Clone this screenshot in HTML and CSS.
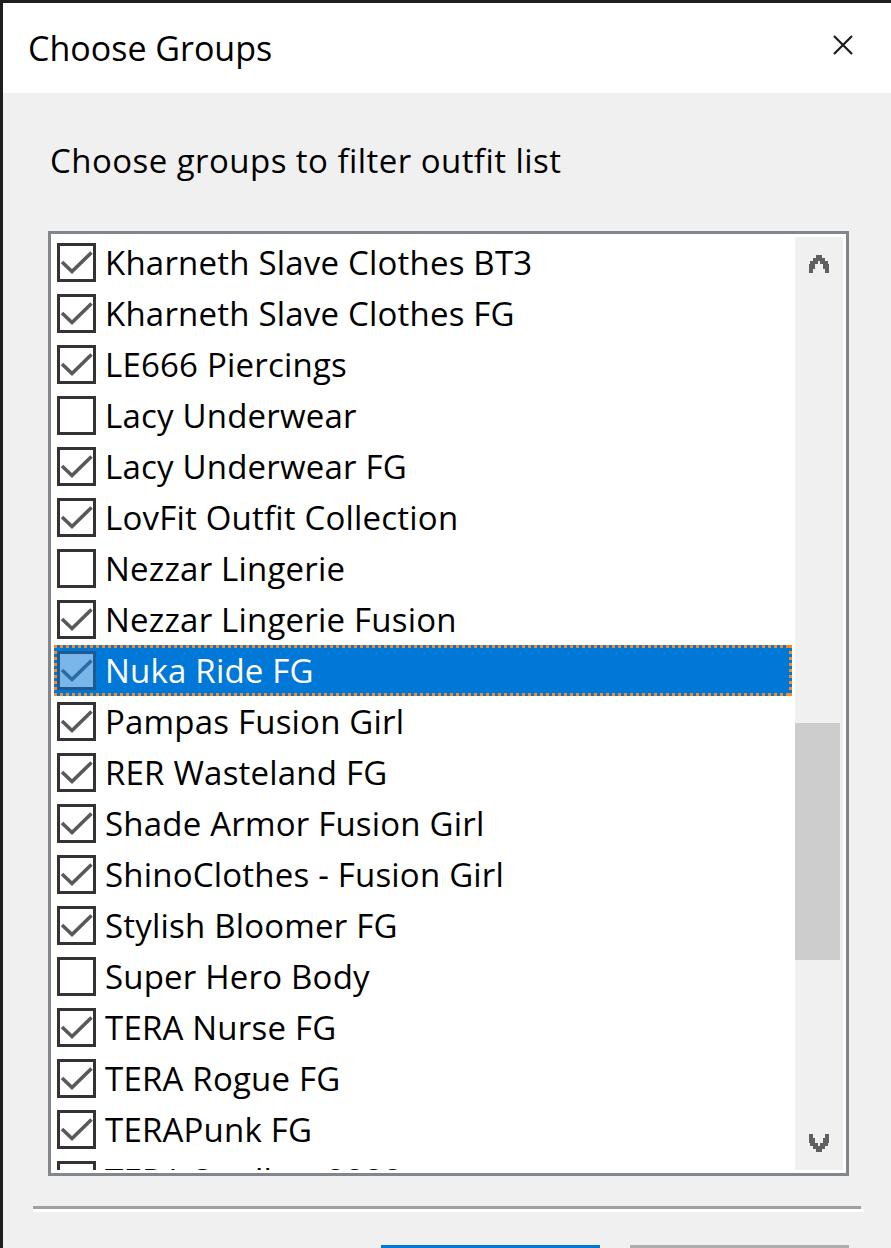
FILE: index.html
```html
<!DOCTYPE html>
<html lang="en">
<head>
    <meta charset="UTF-8">
    <meta name="viewport" content="width=device-width, initial-scale=1.0">
    <title>Choose Groups</title>
    <link rel="stylesheet" href="styles.css">
</head>
<body>
    <div class="window">
        <div class="titlebar">
            <span class="title">Choose Groups</span>
            <svg class="close" width="20" height="20" viewBox="0 0 20 20">
                <path d="M1 1 L19 19 M19 1 L1 19" stroke="#1a1a1a" stroke-width="2.2" fill="none"/>
            </svg>
        </div>

        <div class="content">
            <div class="prompt">Choose groups to filter outfit list</div>

            <div class="listbox">
                <div class="items" id="items"></div>
                <div class="scrollbar">
                    <div class="arrow">
                        <svg class="chevron" width="20" height="18" viewBox="0 0 20 18"><g id="chev">
                            <rect x="7" y="0" width="6" height="3"/>
                            <rect x="4" y="3" width="12" height="3"/>
                            <rect x="1" y="6" width="8" height="3"/><rect x="11" y="6" width="8" height="3"/>
                            <rect x="0" y="9" width="6" height="5"/><rect x="14" y="9" width="6" height="5"/>
                            <rect x="0" y="14" width="4" height="4"/><rect x="16" y="14" width="4" height="4"/>
                        </g></svg>
                    </div>
                    <div class="track"><div class="thumb"></div></div>
                    <div class="arrow">
                        <svg class="chevron" width="20" height="18" viewBox="0 0 20 18"><use href="#chev" transform="translate(0 18) scale(1 -1)"/></svg>
                    </div>
                </div>
            </div>

            <div class="separator"></div>

            <div class="buttons">
                <div class="btn default"></div>
                <div class="btn"></div>
            </div>
        </div>
    </div>

    <script>
        const groups = [
            ['Kharneth Slave Clothes BT3', true],
            ['Kharneth Slave Clothes FG', true],
            ['LE666 Piercings', true],
            ['Lacy Underwear', false],
            ['Lacy Underwear FG', true],
            ['LovFit Outfit Collection', true],
            ['Nezzar Lingerie', false],
            ['Nezzar Lingerie Fusion', true],
            ['Nuka Ride FG', true],
            ['Pampas Fusion Girl', true],
            ['RER Wasteland FG', true],
            ['Shade Armor Fusion Girl', true],
            ['ShinoClothes - Fusion Girl', true],
            ['Stylish Bloomer FG', true],
            ['Super Hero Body', false],
            ['TERA Nurse FG', true],
            ['TERA Rogue FG', true],
            ['TERAPunk FG', true],
            ['TERA Swallow 2222', false]
        ];
        const selected = 8;

        const tick = '<svg viewBox="0 0 33 33" width="33" height="33"><polyline points="2,16 12,25.5 31.5,6.5" fill="none" stroke-width="3.6"/></svg>';

        const list = document.getElementById('items');
        groups.forEach(([name, checked], i) => {
            const row = document.createElement('div');
            row.className = 'item' + (i === selected ? ' selected' : '');
            row.innerHTML = `<span class="check">${checked ? tick : ''}</span><span class="label">${name}</span>`;
            list.appendChild(row);
        });
    </script>
</body>
</html>
```

FILE: styles.css
```css
html, body {
    margin: 0;
    height: 100%;
    overflow: hidden;
}

body {
    background: #f0f0f0;
    font-family: 'Open Sans', 'Noto Sans', sans-serif;
    font-size: 33px;
    color: #000;
}

.window {
    height: 1245px;
    border-left: 3px solid #1f1f1f;
    border-top: 3px solid #1f1f1f;
}

.titlebar {
    height: 90px;
    background: #fff;
    display: flex;
    justify-content: space-between;
    align-items: center;
    padding: 0 38px 0 25px;
}

.title {
    font-size: 34px;
}

.close {
    align-self: flex-start;
    margin-top: 32px;
}

.content {
    padding-left: 45px;
}

.prompt {
    margin-top: 42px;
    margin-left: 2px;
    line-height: 51px;
    letter-spacing: 0.45px;
}

.listbox {
    margin-top: 45px;
    width: 789px;
    height: 933px;
    border: 3px solid #82868d;
    background: #fff;
    padding: 3px;
    display: flex;
    gap: 3px;
}

.items {
    flex: 1;
    height: 933px;
    overflow: hidden;
}

.item {
    position: relative;
    height: 51px;
    display: flex;
    align-items: center;
    padding-left: 3px;
    white-space: nowrap;
    letter-spacing: 0.2px;
}

.check {
    width: 33px;
    height: 33px;
    border: 3px solid #333;
    background: #fff;
    margin-right: 9px;
    flex: none;
}

.check svg {
    display: block;
    stroke: #595959;
}

.item.selected {
    background: #0078d7;
    color: #fff;
}

/* dotted focus rectangle */
.item.selected::after {
    content: '';
    position: absolute;
    inset: 0;
    background:
        repeating-linear-gradient(90deg, #ff8a1c 0 3px, transparent 3px 6px) top / 100% 3px no-repeat,
        repeating-linear-gradient(90deg, #ff8a1c 0 3px, transparent 3px 6px) bottom / 100% 3px no-repeat,
        repeating-linear-gradient(180deg, #ff8a1c 0 3px, transparent 3px 6px) left / 3px 100% no-repeat,
        repeating-linear-gradient(180deg, #ff8a1c 0 3px, transparent 3px 6px) right / 3px 100% no-repeat;
}

.item.selected .check {
    background: #7ab6ea;
    border-color: #1c5a91;
}

.item.selected .check svg {
    stroke: #2b6ba3;
}

.scrollbar {
    width: 48px;
    background: #f0f0f0;
    display: flex;
    flex-direction: column;
}

.arrow {
    height: 54px;
    display: flex;
    align-items: center;
    justify-content: center;
}

.chevron {
    fill: #606060;
    shape-rendering: crispEdges;
}

.track {
    flex: 1;
}

.thumb {
    margin-top: 432px;
    width: 45px;
    height: 237px;
    background: #cdcdcd;
}

.separator {
    margin-top: 30px;
    margin-left: -15px;
    width: 831px;
    height: 3px;
    border-bottom: 3px solid #fff;
    background: linear-gradient(#a0a0a0, #a0a0a0) no-repeat left top / 828px 3px;
}

.buttons {
    margin-top: 33px;
    margin-left: 333px;
    display: flex;
    gap: 30px;
}

.btn {
    width: 213px;
    height: 60px;
    border: 3px solid #adadad;
    background: #e1e1e1;
}

.btn.default {
    border-color: #0078d7;
}
```
